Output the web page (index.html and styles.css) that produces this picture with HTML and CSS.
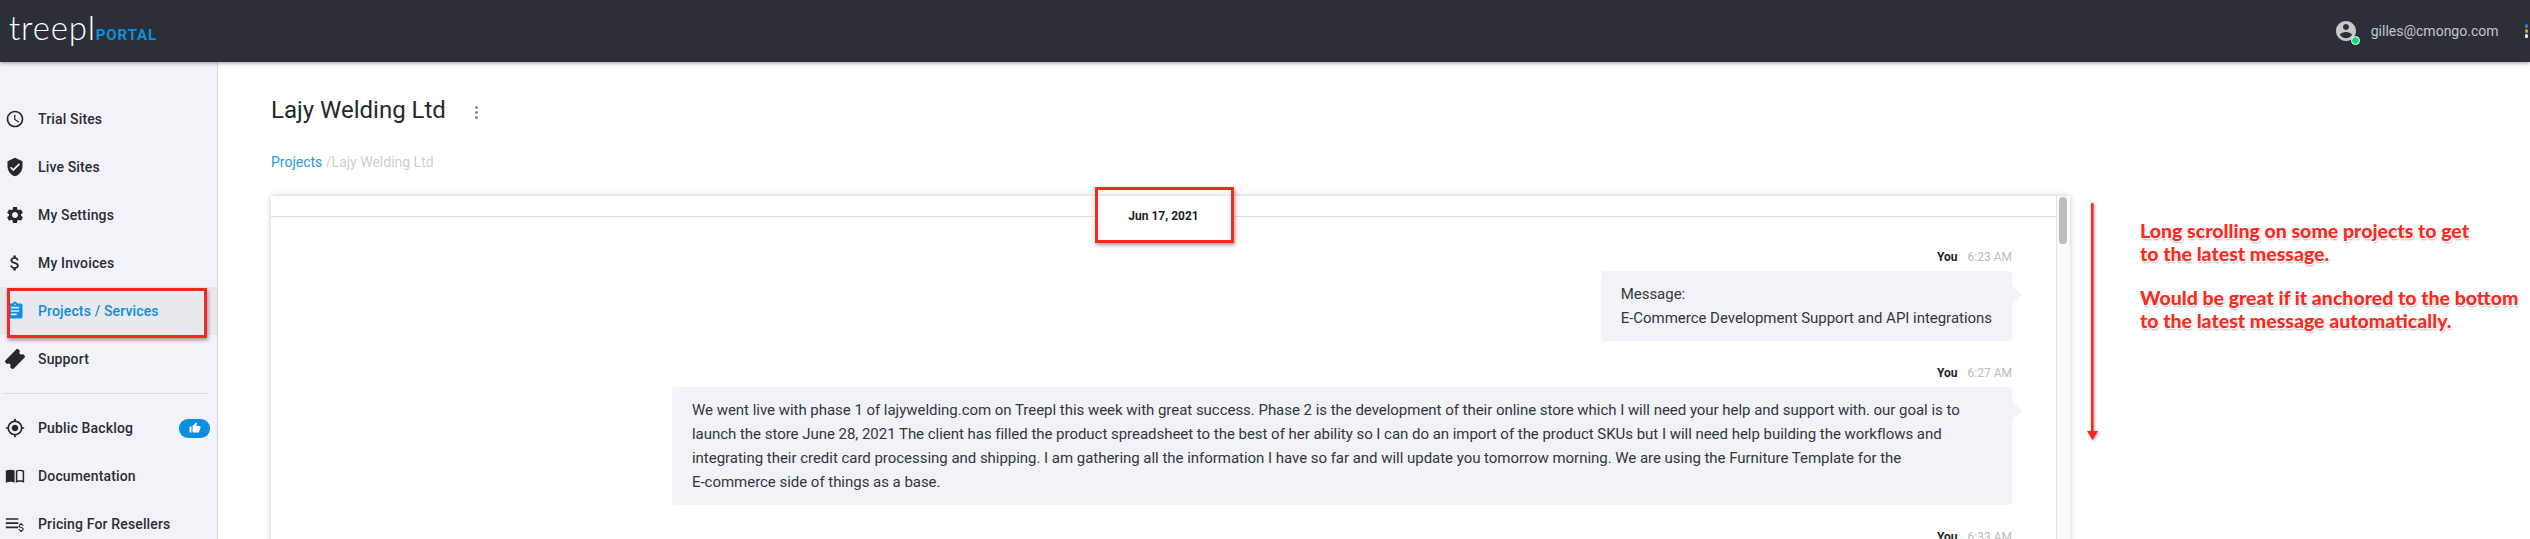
FILE: index.html
```html
<!DOCTYPE html>
<html lang="en">
<head>
  <meta charset="UTF-8" />
  <title>Treepl Portal</title>
  <link rel="stylesheet" href="styles.css">
</head>
<body>
  <header class="topbar">
    <div class="brand">
      <span class="brand-name">treepl</span>
      <span class="brand-tag">PORTAL</span>
    </div>
    <div class="account">
      <span class="avatar">
        <svg viewBox="2 2 20 20" width="20" height="20"><path d="M12 2C6.48 2 2 6.48 2 12s4.48 10 10 10 10-4.48 10-10S17.52 2 12 2zm0 3c1.66 0 3 1.34 3 3s-1.34 3-3 3-3-1.34-3-3 1.34-3 3-3zm0 14.2c-2.5 0-4.71-1.28-6-3.22.03-1.99 4-3.08 6-3.08 1.99 0 5.97 1.09 6 3.08-1.29 1.94-3.5 3.22-6 3.22z"/></svg>
        <span class="status-dot"></span>
      </span>
      <span class="email">gilles@cmongo.com</span>
      <span class="app-dots"><i class="dot-blue"></i><i class="dot-orange"></i><i class="dot-white"></i></span>
    </div>
  </header>

  <div class="layout">
    <nav class="sidebar">
      <a class="nav-item">
        <svg class="nav-icon" viewBox="0 0 24 24"><path d="M11.99 2C6.47 2 2 6.48 2 12s4.47 10 9.99 10C17.52 22 22 17.52 22 12S17.52 2 11.99 2zM12 20c-4.42 0-8-3.58-8-8s3.58-8 8-8 8 3.58 8 8-3.58 8-8 8zm.5-13H11v6l5.25 3.15.75-1.23-4.5-2.67z"/></svg>
        Trial Sites
      </a>
      <a class="nav-item">
        <svg class="nav-icon" viewBox="0 0 24 24"><path d="M12 1L3 5v6c0 5.55 3.84 10.74 9 12 5.16-1.26 9-6.45 9-12V5l-9-4zm-2 16l-4-4 1.41-1.41L10 14.17l6.59-6.59L18 9l-8 8z"/></svg>
        Live Sites
      </a>
      <a class="nav-item">
        <svg class="nav-icon" viewBox="0 0 24 24"><path d="M19.14 12.94c.04-.3.06-.61.06-.94 0-.32-.02-.64-.07-.94l2.03-1.58c.18-.14.23-.41.12-.61l-1.92-3.32c-.12-.22-.37-.29-.59-.22l-2.39.96c-.5-.38-1.03-.7-1.62-.94l-.36-2.54c-.04-.24-.24-.41-.48-.41h-3.84c-.24 0-.43.17-.47.41l-.36 2.54c-.59.24-1.13.57-1.62.94l-2.39-.96c-.22-.08-.47 0-.59.22L2.74 8.87c-.12.21-.08.47.12.61l2.03 1.58c-.05.3-.09.63-.09.94s.02.64.07.94l-2.03 1.58c-.18.14-.23.41-.12.61l1.92 3.32c.12.22.37.29.59.22l2.39-.96c.5.38 1.03.7 1.62.94l.36 2.54c.05.24.24.41.48.41h3.84c.24 0 .44-.17.47-.41l.36-2.54c.59-.24 1.13-.56 1.62-.94l2.39.96c.22.08.47 0 .59-.22l1.92-3.32c.12-.22.07-.47-.12-.61l-2.01-1.58zM12 15.6c-1.98 0-3.6-1.62-3.6-3.6s1.62-3.6 3.6-3.6 3.6 1.62 3.6 3.6-1.62 3.6-3.6 3.6z"/></svg>
        My Settings
      </a>
      <a class="nav-item">
        <svg class="nav-icon" viewBox="0 0 24 24"><path d="M11.8 10.9c-2.27-.59-3-1.2-3-2.15 0-1.09 1.01-1.85 2.7-1.85 1.78 0 2.44.85 2.5 2.1h2.21c-.07-1.72-1.12-3.3-3.21-3.81V3h-3v2.16c-1.94.42-3.5 1.68-3.5 3.61 0 2.31 1.91 3.46 4.7 4.13 2.5.6 3 1.48 3 2.41 0 .69-.49 1.79-2.7 1.79-2.06 0-2.87-.92-2.98-2.1h-2.2c.12 2.19 1.76 3.42 3.68 3.83V21h3v-2.15c1.95-.37 3.5-1.5 3.5-3.55 0-2.84-2.43-3.81-4.7-4.4z"/></svg>
        My Invoices
      </a>
      <a class="nav-item active">
        <svg class="nav-icon" viewBox="0 0 24 24"><path d="M19 3h-4.18C14.4 1.84 13.3 1 12 1c-1.3 0-2.4.84-2.82 2H5c-1.1 0-2 .9-2 2v14c0 1.1.9 2 2 2h14c1.1 0 2-.9 2-2V5c0-1.1-.9-2-2-2zm-7 0c.55 0 1 .45 1 1s-.45 1-1 1-1-.45-1-1 .45-1 1-1zm2 14H7v-2h7v2zm3-4H7v-2h10v2zm0-4H7V7h10v2z"/></svg>
        Projects / Services
      </a>
      <a class="nav-item">
        <svg class="nav-icon" viewBox="0 0 24 24"><path transform="rotate(-45 12 12)" d="M23 9.500V7c0-1.100-.9-2-2-2H3c-1.100 0-2 .9-2 2v2.500c1.400 0 2.500 1.100 2.500 2.500S2.400 14.500 1 14.500V17c0 1.100.9 2 2 2h18c1.100 0 2-.9 2-2v-2.500c-1.400 0-2.500-1.100-2.500-2.500s1.100-2.500 2.500-2.500z"/></svg>
        Support
      </a>
      <div class="nav-divider"></div>
      <a class="nav-item">
        <svg class="nav-icon" viewBox="0 0 24 24"><path d="M12 8c-2.21 0-4 1.79-4 4s1.79 4 4 4 4-1.79 4-4-1.79-4-4-4zm8.94 3c-.46-4.17-3.77-7.48-7.94-7.94V1h-2v2.06C6.83 3.52 3.52 6.83 3.06 11H1v2h2.06c.46 4.17 3.77 7.48 7.94 7.94V23h2v-2.06c4.17-.46 7.48-3.77 7.94-7.94H23v-2h-2.06zM12 19c-3.87 0-7-3.13-7-7s3.13-7 7-7 7 3.13 7 7-3.13 7-7 7z"/></svg>
        Public Backlog
        <span class="badge">
          <svg viewBox="0 0 24 24" width="12" height="12"><path d="M1 21h4V9H1v12zm22-11c0-1.1-.9-2-2-2h-6.31l.95-4.57.03-.32c0-.41-.17-.79-.44-1.06L14.17 1 7.59 7.59C7.22 7.95 7 8.45 7 9v10c0 1.1.9 2 2 2h9c.83 0 1.54-.5 1.84-1.22l3.02-7.05c.09-.23.14-.47.14-.73v-2z"/></svg>
        </span>
      </a>
      <a class="nav-item">
        <svg class="nav-icon" viewBox="0 0 24 24"><path d="M1 5.5c3.6-1.5 7.6-1.5 10.5 0v14.5c-2.9-1.3-6.9-1.3-10.5 0z"/><path d="M13 5.5c2.9-1.5 6.9-1.5 10 0V20c-3.1-1.3-7.100-1.300-10 0zm1.800 1.100v10.900c2.300-.7 4.900-.7 6.400-.1V6.700c-2.100-.8-4.500-.8-6.400-.1z"/></svg>
        Documentation
      </a>
      <a class="nav-item">
        <svg class="nav-icon" viewBox="0 0 24 24"><path d="M1 5h15v2H1zM1 10h15v2H1zM1 15h15v2H1z"/><path transform="translate(12.500 9) scale(.6)" d="M11.800 10.900c-2.270-.59-3-1.200-3-2.150 0-1.090 1.010-1.850 2.700-1.850 1.780 0 2.440.85 2.500 2.100h2.210c-.07-1.720-1.120-3.300-3.210-3.810V3h-3v2.160c-1.940.42-3.500 1.680-3.500 3.610 0 2.310 1.910 3.460 4.700 4.130 2.500.6 3 1.480 3 2.410 0 .69-.49 1.790-2.700 1.790-2.060 0-2.870-.92-2.980-2.100h-2.200c.12 2.190 1.760 3.420 3.680 3.830V21h3v-2.150c1.950-.37 3.500-1.500 3.500-3.550 0-2.840-2.430-3.810-4.700-4.400z"/></svg>
        Pricing For Resellers
      </a>
    </nav>

    <main class="content">
      <div class="title-row">
        <h1>Lajy Welding Ltd</h1>
        <span class="kebab"><i></i><i></i><i></i></span>
      </div>
      <div class="breadcrumb"><a>Projects</a> <span>/Lajy Welding Ltd</span></div>

      <section class="chat-card">
        <div class="chat-scroll">
          <div class="date-row"><span>Jun 17, 2021</span></div>

          <div class="message">
            <div class="message-head"><b>You</b><span>6:23 AM</span></div>
            <div class="bubble">
              <p>Message:</p>
              <p>E-Commerce Development Support and API integrations</p>
            </div>
          </div>

          <div class="message">
            <div class="message-head"><b>You</b><span>6:27 AM</span></div>
            <div class="bubble bubble-wide">
              <p>We went live with phase 1 of lajywelding.com on Treepl this week with great success. Phase 2 is the development of their online store which I will need your help and support with. our goal is to launch the store June 28, 2021 The client has filled the product spreadsheet to the best of her ability so I can do an import of the product SKUs but I will need help building the workflows and integrating their credit card processing and shipping. I am gathering all the information I have so far and will update you tomorrow morning. We are using the Furniture Template for the <span class="nowrap">E-commerce</span> side of things as a base.</p>
            </div>
          </div>

          <div class="message">
            <div class="message-head"><b>You</b><span>6:33 AM</span></div>
          </div>
        </div>
        <div class="scroll-track"><div class="scroll-thumb"></div></div>
      </section>
    </main>
  </div>

  <!-- red markup drawn over the screenshot -->
  <div class="mark mark-nav"></div>
  <div class="mark mark-date"></div>
  <svg class="mark-arrow" viewBox="0 0 16 240" width="16" height="240"><path d="M7 0h2.500v228H14l-5.500 9L3 228h4z"/></svg>
  <div class="note">
    <p>Long scrolling on some projects to get<br>to the latest message.</p>
    <p>Would be great if it anchored to the bottom<br>to the latest message automatically.</p>
  </div>
</body>
</html>
```

FILE: styles.css
```css
* { box-sizing: border-box; margin: 0; padding: 0; }
html, body { width: 100%; height: 100%; overflow: hidden; background: #fff; font-family: Roboto, "Liberation Sans", sans-serif; font-size: 14px; color: #2b2e33; }

/* top bar */
.topbar { height: 62px; background: #2b3038; display: flex; align-items: center; justify-content: space-between; box-shadow: 0 1px 4px rgba(0,0,0,.4); position: relative; z-index: 2; }
.brand { display: flex; align-items: baseline; padding-left: 9px; margin-bottom: 9px; }
.brand-name { font-family: Lato, sans-serif; font-weight: 300; font-size: 33px; line-height: 40px; color: #fff; letter-spacing: .8px; }
.brand-tag { font-size: 15px; font-weight: 700; color: #0d8ede; letter-spacing: .9px; }
.account { display: flex; align-items: center; }
.avatar { width: 20px; height: 20px; position: relative; margin-right: 15px; }
.avatar svg { fill: #c9c9c9; display: block; }
.status-dot { position: absolute; right: -4px; bottom: -4px; width: 9px; height: 9px; border-radius: 50%; background: #0ddc78; border: 1px solid #fff; }
.email { color: #c4c6c8; font-size: 14px; margin-right: 26px; }
.app-dots { display: flex; flex-direction: column; gap: 1.500px; margin-right: 2px; }
.app-dots i { width: 3.500px; height: 3.500px; border-radius: 50%; display: block; }
.dot-blue { background: #0d8ede; }
.dot-orange { background: #e3a008; }
.dot-white { background: #fff; }

/* layout */
.layout { display: flex; height: 477px; }
.sidebar { width: 218px; flex: none; background: #f2f3f9; border-right: 1px solid #d3d5da; padding-top: 33px; }
.nav-item { height: 48px; display: flex; align-items: center; gap: 13px; padding-left: 5px; font-weight: 500; letter-spacing: .15px; white-space: nowrap; }
.nav-icon { width: 20px; height: 20px; fill: #25282c; flex: none; }
.nav-item.active { background: #e8e9ef; color: #0d8ede; }
.nav-item.active .nav-icon { fill: #0d8ede; }
.nav-divider { height: 1px; background: #d9dae0; margin: 10px 9px 10px 3px; }
.badge { margin-left: auto; margin-right: 7px; width: 31px; height: 19px; border-radius: 9px; background: #0d8ede; display: flex; align-items: center; justify-content: center; }
.badge svg { fill: #fff; }

/* project */
.content { flex: 1; padding: 33px 0 0 53px; min-width: 0; }
.title-row { display: flex; align-items: center; height: 30px; }
h1 { font-size: 24px; font-weight: 400; color: #24272b; line-height: 30px; }
.kebab { display: flex; flex-direction: column; gap: 2px; margin: 4px 0 0 29px; }
.kebab i { width: 3px; height: 3px; border-radius: 50%; background: #8b8b8b; display: block; }
.breadcrumb { margin-top: 28px; line-height: 18px; font-size: 14px; }
.breadcrumb a { color: #2a97e0; }
.breadcrumb span { color: #cfcfcf; }

/* chat card */
.chat-card { width: 1799px; height: 400px; margin-top: 25px; display: flex; background: #fff; box-shadow: 0 0 6px rgba(0,0,0,.22); }
.chat-scroll { flex: 1; min-width: 0; border-right: 1px solid #e2e3e6; padding: 0 44px 0 0; }
.date-row { height: 40px; margin-right: -44px; display: flex; align-items: center; justify-content: center; position: relative; }
.date-row::before { content: ""; position: absolute; left: 0; right: 0; top: 20px; height: 1px; background: #dcdde0; }
.date-row span { position: relative; background: #fff; padding: 0 32px; font-size: 12px; font-weight: 700; color: #1d1f22; }
.message { margin-top: 24px; display: flex; flex-direction: column; align-items: flex-end; }
.date-row + .message { margin-top: 13px; }
.message-head { height: 16px; line-height: 16px; font-size: 12px; display: flex; gap: 10px; }
.message-head b { color: #1d1f22; }
.message-head span { color: #bcbcbc; }
.bubble { margin-top: 6px; position: relative; padding: 11px 20px; background: #f2f3f9; border-radius: 4px; line-height: 24px; font-size: 15px; letter-spacing: -.03px; color: #33363b; }
.bubble-wide { width: 1340px; padding-right: 40px; }
.bubble::after { content: ""; position: absolute; right: -10px; top: 14px; border-left: 10px solid #f2f3f9; border-top: 10px solid transparent; border-bottom: 10px solid transparent; }
.nowrap { white-space: nowrap; }
.scroll-track { width: 13px; flex: none; background: #fafafa; padding: 1px 2px; }
.scroll-thumb { width: 8px; height: 47px; border-radius: 4px; background: #bdbdbd; }

/* annotations */
.mark { position: absolute; border: 3px solid #f5291c; box-shadow: 1px 2px 4px rgba(0,0,0,.4); }
.mark-nav { left: 7px; top: 288px; width: 200px; height: 50px; }
.mark-date { left: 1095px; top: 187px; width: 139px; height: 56px; }
.mark-arrow { position: absolute; left: 2084px; top: 203px; fill: #f5291c; filter: drop-shadow(1px 1px 1.500px rgba(0,0,0,.4)); }
.note { position: absolute; left: 2140px; top: 220px; font-family: Lato, sans-serif; font-weight: 900; font-size: 19.500px; line-height: 22.500px; color: #fb2a1e; white-space: nowrap; text-shadow: 1px 1px 0 #fff, -1px -1px 0 #fff, 1px 2px 2px rgba(0,0,0,.3); }
.note p + p { margin-top: 22px; }
```
